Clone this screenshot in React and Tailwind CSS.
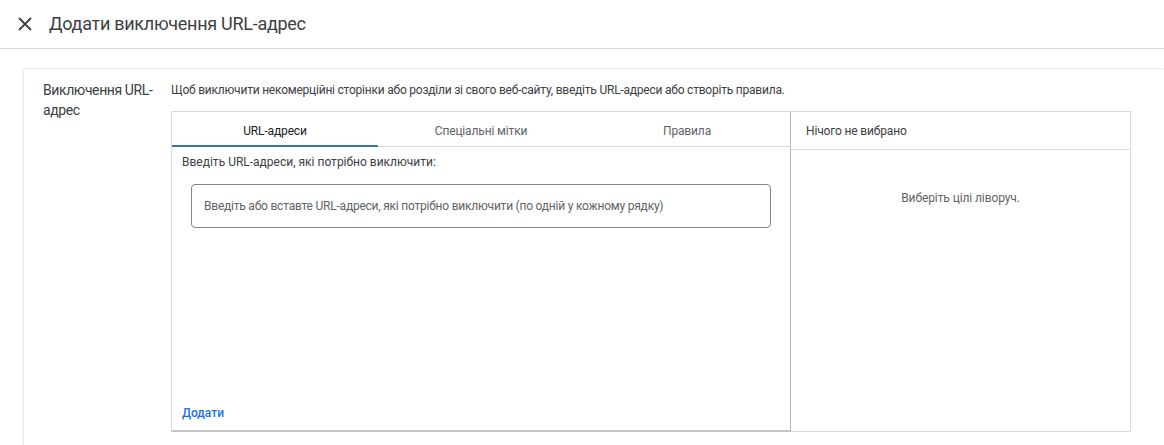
import React from "react";

const tabs = ["URL-адреси", "Спеціальні мітки", "Правила"];

const App = () => {
  return (
    <div className="w-[1164px] h-[445px] overflow-hidden bg-white text-[#3c4043] font-['Roboto','Noto_Sans',sans-serif]">
      {/* Header */}
      <div className="h-[49px] flex items-center border-b border-[#dadce0]">
        <button className="w-[48px] h-[48px] flex items-center justify-center pl-[1px]" aria-label="Close">
          <svg width="14" height="14" viewBox="0 0 14 14">
            <path d="M1 1L13 13M13 1L1 13" stroke="#3c4043" strokeWidth="1.8" />
          </svg>
        </button>
        <h1 className="text-[18px] leading-6 tracking-[-0.28px] text-[#3c4043] ml-[1px] mb-[1px]">Додати виключення URL-адрес</h1>
      </div>

      {/* Card */}
      <div className="ml-[23px] mt-[19px] h-[380px] border-t border-l border-[#ebebeb] rounded-[2px] shadow-[0_1px_2px_rgba(60,64,67,0.15)] flex pt-[11px]">
        <div className="w-[147px] shrink-0 pl-[19px] pr-[10px] text-[14px] leading-[20px] tracking-[-0.4px] text-[#3c4043]">
          Виключення URL-адрес
        </div>
        <div className="flex flex-col">
          <p className="text-[12px] leading-[16px] tracking-[-0.22px] text-[#3c4043] pt-[2px]">
            Щоб виключити некомерційні сторінки або розділи зі свого веб-сайту, введіть URL-адреси або створіть правила.
          </p>
          <div className="mt-[13px] flex h-[321px] w-[960px]">
            {/* Left panel */}
            <div className="w-[620px] h-[321px] flex flex-col border-t border-l border-[#dadce0] border-b-2 border-b-[#c4c4c4] border-r border-r-[#b8b8b8]">
              <div className="flex h-[35px] shrink-0 border-b border-[#dadce0]">
                {tabs.map((t, i) => (
                  <div
                    key={t}
                    className={`flex-1 flex items-center justify-center pt-[4px] text-[12px] tracking-[-0.15px] ${
                      i === 0 ? "text-[#202124] border-b-2 border-[#3b73aa] -mb-[1px]" : "text-[#5f6368]"
                    }`}
                  >
                    {t}
                  </div>
                ))}
              </div>
              <div className="flex-1 flex flex-col px-[10px]">
                <p className="text-[12px] leading-[16px] text-[#3c4043] mt-[7px]">
                  Введіть URL-адреси, які потрібно виключити:
                </p>
                <div className="ml-[9px] mt-[14px] w-[580px] h-[44px] border border-[#80868b] rounded-[4px] flex items-center px-[12px] text-[12px] tracking-[-0.22px] text-[#5f6368]">
                  Введіть або вставте URL-адреси, які потрібно виключити (по одній у кожному рядку)
                </div>
                <div className="mt-auto mb-[8px] text-[12px] font-medium text-[#1a73e8]">Додати</div>
              </div>
            </div>
            {/* Right panel */}
            <div className="w-[340px] h-[321px] flex flex-col border-t border-r border-b border-[#dadce0]">
              <div className="h-[38px] flex items-center px-[15px] border-b border-[#dadce0] text-[12px] tracking-[-0.15px] text-[#3c4043]">
                Нічого не вибрано
              </div>
              <div className="flex justify-center pt-[39px] text-[12px] tracking-[-0.1px] text-[#5f6368]">
                Виберіть цілі ліворуч.
              </div>
            </div>
          </div>
        </div>
      </div>
    </div>
  );
};

export default App;
